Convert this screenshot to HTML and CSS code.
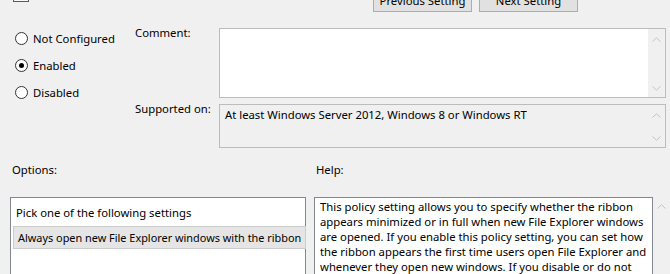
FILE: index.html
```html
<!DOCTYPE html>
<html lang="en">
<head>
  <meta charset="UTF-8">
  <meta name="viewport" content="width=device-width, initial-scale=1.0">
  <title>Start File Explorer with ribbon minimized</title>
  <link rel="stylesheet" href="styles.css">
</head>
<body>
  <div class="toolbar">
    <div class="policy-icon"></div>
    <div class="nav-buttons">
      <button class="nav-button">Previous Setting</button>
      <button class="nav-button">Next Setting</button>
    </div>
  </div>

  <div class="settings">
    <div class="states">
      <label class="state"><span class="radio"></span>Not Configured</label>
      <label class="state"><span class="radio radio-checked"></span>Enabled</label>
      <label class="state"><span class="radio"></span>Disabled</label>
    </div>

    <div class="field-label">Comment:</div>
    <div class="field field-comment">
      <div class="field-text"></div>
      <div class="scrollbar">
        <svg width="9" height="5" viewBox="0 0 9 5"><path d="M0.5 4.5 L4.5 0.8 L8.5 4.5" fill="none" stroke="#c4c4c4"/></svg>
        <svg width="9" height="5" viewBox="0 0 9 5"><path d="M0.5 0.5 L4.5 4.2 L8.5 0.5" fill="none" stroke="#c4c4c4"/></svg>
      </div>
    </div>

    <div class="field-label">Supported on:</div>
    <div class="field field-supported">
      <div class="field-text">At least Windows Server 2012, Windows 8 or Windows RT</div>
      <div class="scrollbar">
        <svg width="9" height="5" viewBox="0 0 9 5"><path d="M0.5 4.5 L4.5 0.8 L8.5 4.5" fill="none" stroke="#c4c4c4"/></svg>
        <svg width="9" height="5" viewBox="0 0 9 5"><path d="M0.5 0.5 L4.5 4.2 L8.5 0.5" fill="none" stroke="#c4c4c4"/></svg>
      </div>
    </div>
  </div>

  <div class="panes">
    <div class="pane pane-options">
      <p class="pane-title">Options:</p>
      <div class="options-box">
        <p class="options-caption">Pick one of the following settings</p>
        <div class="combo">Always open new File Explorer windows with the ribbon</div>
      </div>
    </div>

    <div class="pane pane-help">
      <p class="pane-title">Help:</p>
      <div class="help">
        <div class="help-box">
          This policy setting allows you to specify whether the ribbon<br>
          appears minimized or in full when new File Explorer windows<br>
          are opened. If you enable this policy setting, you can set how<br>
          the ribbon appears the first time users open File Explorer and<br>
          whenever they open new windows. If you disable or do not<br>
          configure this policy setting, users can choose how the ribbon
        </div>
        <div class="scrollbar help-scrollbar">
          <svg width="9" height="5" viewBox="0 0 9 5"><path d="M0.5 4.5 L4.5 0.8 L8.5 4.5" fill="none" stroke="#c4c4c4"/></svg>
        </div>
      </div>
    </div>
  </div>
</body>
</html>
```

FILE: styles.css
```css
body {
  margin: 0;
  background: #f0f0f0;
  color: #000;
  font-family: "Noto Sans", "Open Sans", sans-serif;
  font-size: 11.3px;
  line-height: 16px;
  overflow: hidden;
}

p {
  margin: 0;
}

.toolbar {
  display: flex;
  justify-content: space-between;
  align-items: flex-end;
  height: 12px;
  padding-left: 13px;
}

.policy-icon {
  align-self: flex-start;
  width: 14px;
  height: 14px;
  margin-top: -14px;
  border: 1px solid #5a5a5a;
  background: #fafafa;
}

.nav-buttons {
  display: flex;
  gap: 7px;
  margin-right: 92px;
}

.nav-button {
  width: 99px;
  height: 23px;
  background: #e1e1e1;
  border: 1px solid #adadad;
  font-family: inherit;
  font-size: 11.3px;
  color: #000;
  padding: 0;
}

.settings {
  display: grid;
  grid-template-columns: 135px 84px 447px;
  grid-template-rows: 70px 44px;
  row-gap: 6px;
  margin-top: 16px;
}

.states {
  grid-row: 1 / 3;
  display: flex;
  flex-direction: column;
  margin-top: -3px;
  padding-left: 15px;
}

.state {
  display: flex;
  align-items: center;
  gap: 5px;
  height: 27px;
}

.radio {
  width: 11px;
  height: 11px;
  border: 1px solid #333;
  border-radius: 50%;
  background: #fff;
  display: flex;
  align-items: center;
  justify-content: center;
}

.radio-checked::after {
  content: "";
  width: 5px;
  height: 5px;
  border-radius: 50%;
  background: #000;
}

.field-label {
  margin-top: -3px;
}

.field {
  display: flex;
  border: 1px solid #bcbcbc;
}

.field-comment {
  background: #fff;
}

.field-supported {
  background: #f0f0f0;
}

.field-text {
  flex: 1;
  padding: 2px 5px;
}

.scrollbar {
  width: 17px;
  background: #f0f0f0;
  display: flex;
  flex-direction: column;
  justify-content: space-between;
  align-items: center;
  padding: 8px 0 6px;
}

.panes {
  display: flex;
  gap: 8px;
  margin-top: 14px;
  padding-left: 10px;
}

.pane-title {
  padding-left: 2px;
  margin-bottom: 19px;
}

.pane-options {
  width: 297px;
}

.options-box {
  height: 90px;
  background: #fff;
  border: 1px solid #828790;
  padding: 7px 0 0 2px;
  box-sizing: border-box;
}

.options-caption {
  padding-left: 3px;
  margin-bottom: 5px;
}

.combo {
  height: 21px;
  margin-right: -1px;
  padding-left: 4px;
  background: #e5e5e5;
  border: 1px solid #cccccc;
  font-size: 10.9px;
  line-height: 21px;
  white-space: nowrap;
  overflow: hidden;
}

.help {
  display: flex;
}

.help-box {
  width: 332px;
  height: 90px;
  padding: 1px 0 0 5px;
  background: #fff;
  border: 1px solid #828790;
  line-height: 15px;
  white-space: nowrap;
  overflow: hidden;
}

.help-scrollbar {
  background: transparent;
  justify-content: flex-start;
  padding-top: 7px;
}
```
